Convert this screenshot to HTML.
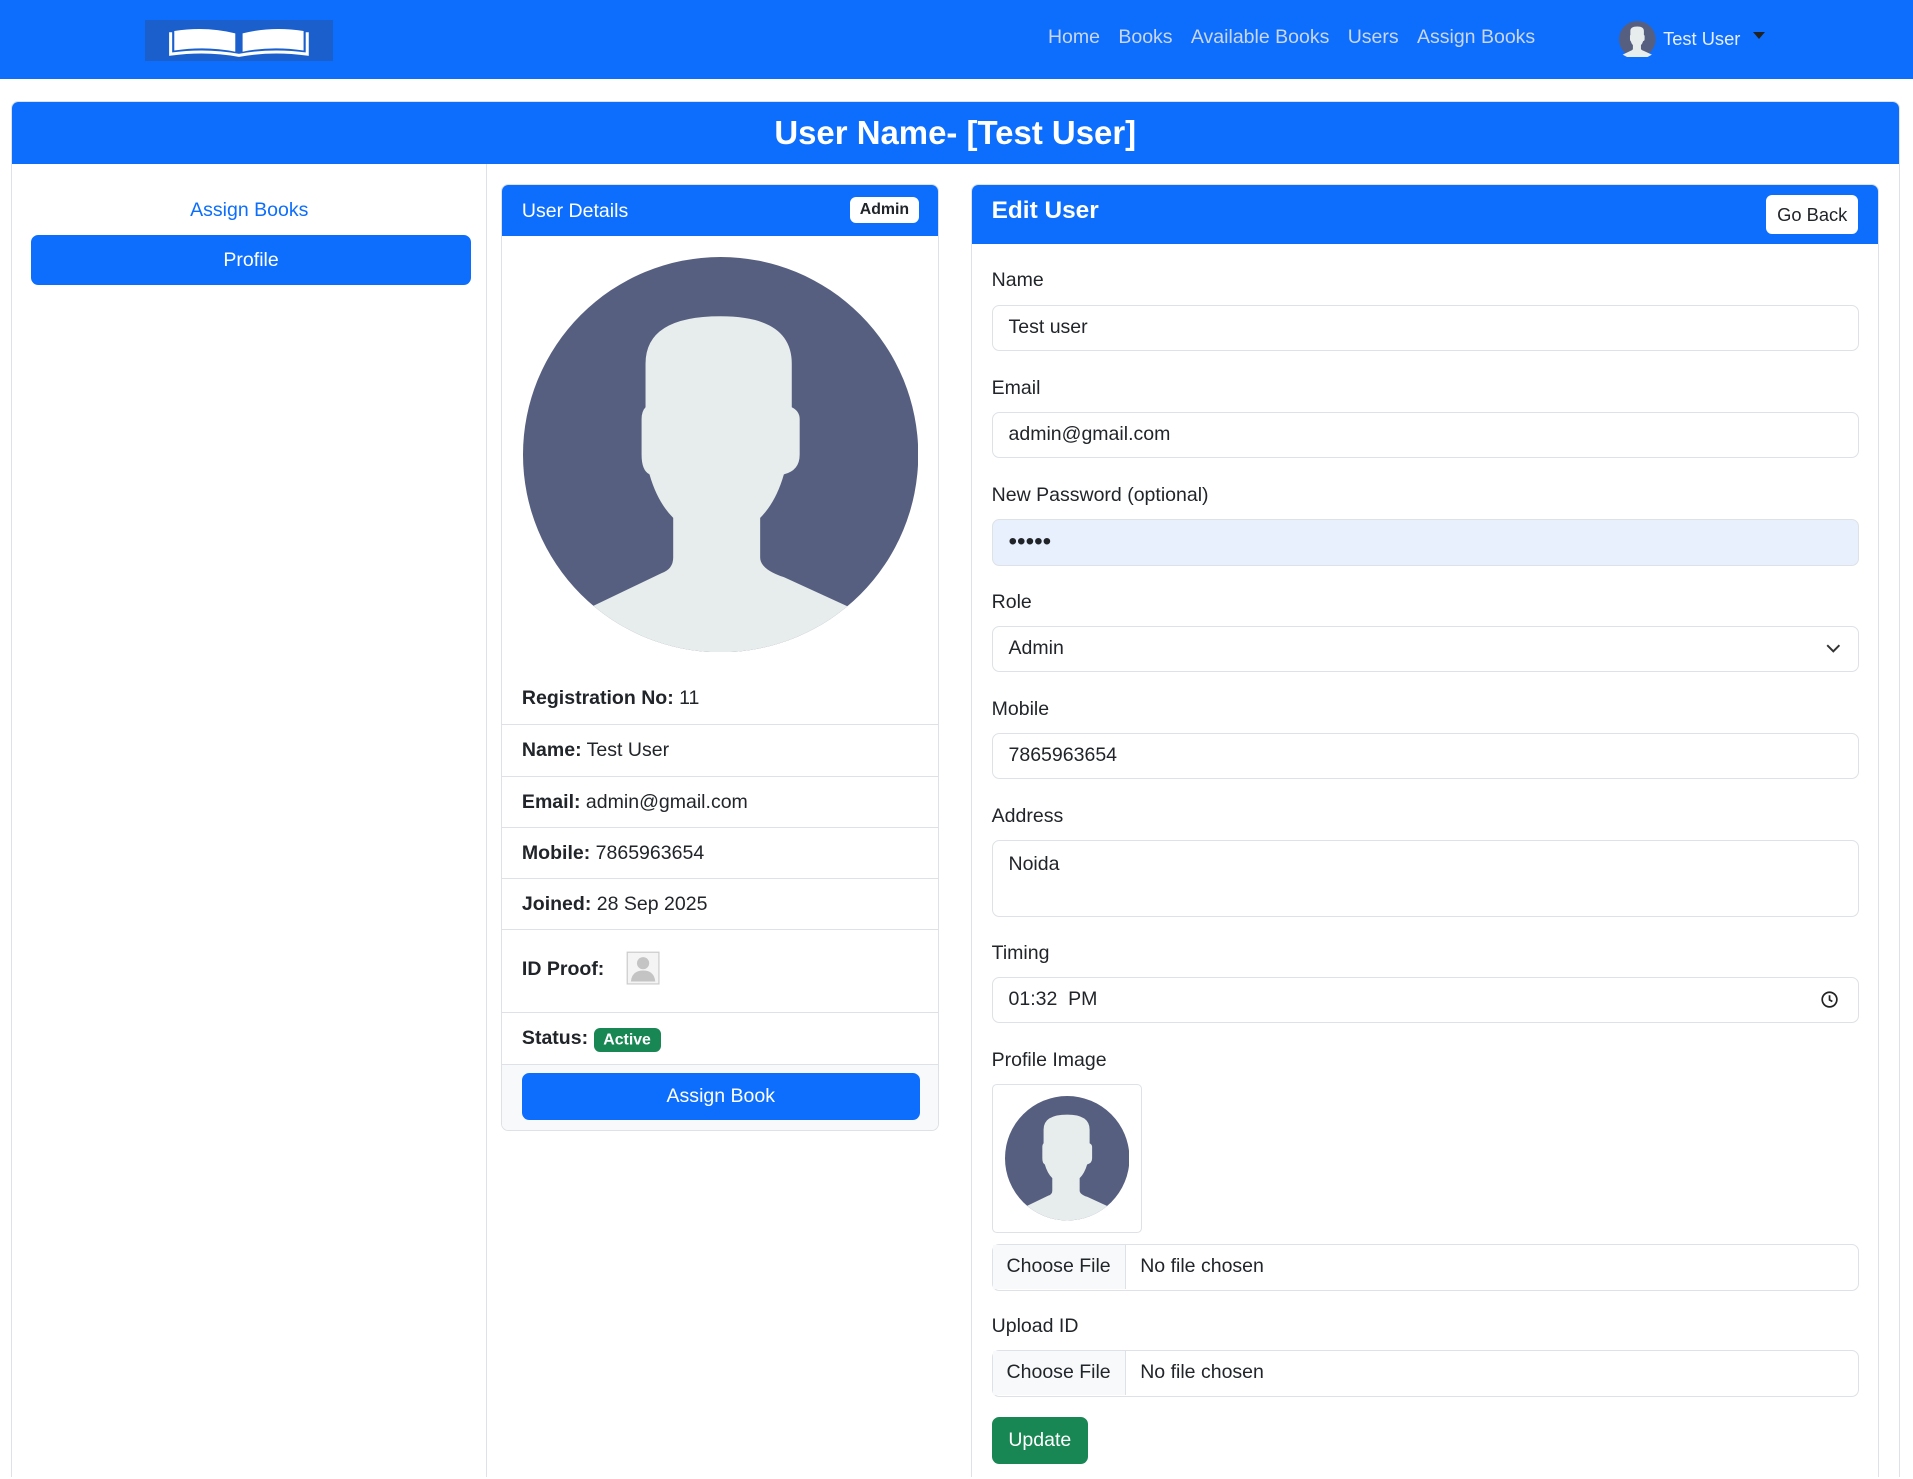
<!DOCTYPE html>
<html><head><meta charset="utf-8">
<style>
html{zoom:1.22;overflow:hidden;height:1211px}
*{box-sizing:border-box}
body{margin:0;height:1211px;overflow:hidden;font-family:"Liberation Sans",sans-serif;font-size:16px;color:#212529;background:#fff}
.wrap{position:relative;width:1568px;height:1211px;overflow:hidden}
.nav{position:absolute;left:0;top:0;width:1568px;height:65px;background:#0d6efd}
.logo{position:absolute;left:119px;top:16px;width:154px;height:34px;background:#1a5fcc}
.links{position:absolute;left:859px;top:21px;font-size:16px;color:#c9d6ee}
.links span{margin-right:15px}
.user{position:absolute;left:1327px;top:17px;color:#e6eeff;font-size:15px}
.main{position:absolute;left:9px;top:83px;width:1548px;height:1128px;border:1px solid #dee2e6;border-bottom:0;border-radius:6px 6px 0 0;overflow:hidden}
.mh{height:51px;background:#0d6efd;color:#fff;text-align:center;font-size:27px;font-weight:bold;line-height:51px}
.left{position:absolute;left:0;top:51px;width:389px;height:1077px;border-right:1px solid #dee2e6}
.abl{position:absolute;left:0;width:389px;top:28px;text-align:center;color:#0d6efd;font-size:16px}
.prof{position:absolute;left:16px;top:58px;width:360px;height:41px;background:#0d6efd;border-radius:6px;color:#fff;text-align:center;line-height:41px}
.card{position:absolute;border:1px solid #dee2e6;border-radius:6px;overflow:hidden;background:#fff}
.ch{background:#0d6efd;color:#fff}
.row{position:absolute;left:0;width:100%;border-top:1px solid #dee2e6;padding-left:16px}
label{position:absolute;left:16px;font-size:16px}
.inp{position:absolute;left:16px;width:711px;height:38px;border:1px solid #dee2e6;border-radius:6px;padding-left:13px;line-height:36px}
</style></head><body><div class="wrap">
<div class="nav">
<div class="logo"><svg width="154" height="34" viewBox="0 0 154 34"><path d="M24 9 Q50 5 74 11 L74 26 Q50 21 24 25Z M80 11 Q104 5 130 9 L130 25 Q104 21 80 26Z" fill="#fff"/><path d="M21 10 L21 28 Q50 24 77 29 Q104 24 133 28 L133 10" fill="none" stroke="#fff" stroke-width="2.5"/></svg></div>
<div class="links"><span>Home</span><span>Books</span><span>Available Books</span><span>Users</span><span>Assign Books</span></div>
<div class="user"><svg width="30" height="30" viewBox="0 0 100 100" style="vertical-align:middle"><circle cx="50" cy="50" r="50" fill="#565f7f"/><path d="M38 66L38 76Q38 79 35 80L10 92L25 100L75 100L90 92L66 81Q60 79 60 76L60 66Q64 62 66 55Q70 54 70 50L70 41Q70 39 68 38L68 27Q68 15 50 15Q31 15 31 27L31 38Q30 39 30 41L30 50Q30 54 32 55Q34 62 38 66Z" fill="#e7ecec"/></svg> <span style="vertical-align:middle;margin-left:2px">Test User</span> <span style="display:inline-block;vertical-align:middle;margin-left:6px;border:5px solid transparent;border-top:6px solid #222;border-bottom:0;position:relative;top:-3px"></span></div>
</div>

<div class="main">
<div class="mh">User Name- [Test User]</div>
<div class="left"><div class="abl">Assign Books</div><div class="prof">Profile</div></div>
</div>

<div class="card" style="left:411px;top:151px;width:359px;height:776px">
<div class="ch" style="height:42px;padding:12px 16px;position:relative">User Details<span style="position:absolute;right:16px;top:10px;background:#fff;color:#212529;font-size:13px;font-weight:bold;padding:3px 8px;border-radius:5px">Admin</span></div>
<svg style="position:absolute;left:17px;top:59px" width="324" height="324" viewBox="0 0 100 100"><defs><clipPath id="c1"><circle cx="50" cy="50" r="50"/></clipPath></defs><circle cx="50" cy="50" r="50" fill="#565f7f"/><path clip-path="url(#c1)" d="M38 66L38 76Q38 79 35 80L10 92L10 100L90 100L90 92L66 81Q60 79 60 76L60 66Q64 62 66 55Q70 54 70 50L70 41Q70 39 68 38L68 27Q68 15 50 15Q31 15 31 27L31 38Q30 39 30 41L30 50Q30 54 32 55Q34 62 38 66Z" fill="#e7ecec"/></svg>
<div class="row" style="top:400px;border-top:0;line-height:42px;height:42px"><b>Registration No:</b> 11</div>
<div class="row" style="top:442px;line-height:41px;height:42px"><b>Name:</b> Test User</div>
<div class="row" style="top:484px;line-height:41px;height:42px"><b>Email:</b> admin@gmail.com</div>
<div class="row" style="top:526px;line-height:41px;height:42px"><b>Mobile:</b> 7865963654</div>
<div class="row" style="top:568px;line-height:41px;height:42px"><b>Joined:</b> 28 Sep 2025</div>
<div class="row" style="top:610px;height:68px;line-height:64px"><b>ID Proof:</b>
<svg style="position:absolute;left:101px;top:17px" width="28" height="30" viewBox="0 0 28 30"><rect x="1" y="1" width="26" height="26" fill="#f4f4f4" stroke="#ccc"/><circle cx="14" cy="10" r="5" fill="#c4c4c4"/><path d="M4 25Q5 16 14 16Q23 16 24 25Z" fill="#c4c4c4"/></svg></div>
<div class="row" style="top:678px;height:42px;line-height:42px"><b>Status:</b> <span style="background:#198754;color:#fff;font-size:13px;font-weight:bold;padding:3px 8px;border-radius:5px">Active</span></div>
<div class="row" style="top:720px;height:56px;background:#f8f9fa"></div>
<div style="position:absolute;left:16px;top:728px;width:326px;height:38px;background:#0d6efd;border-radius:6px;color:#fff;text-align:center;line-height:38px">Assign Book</div>
</div>

<div class="card" style="left:796px;top:151px;width:744px;height:1060px;border-bottom:0;border-radius:6px 6px 0 0">
<div class="ch" style="height:48px;position:relative;padding:10px 16px;font-size:20px;font-weight:bold">Edit User<span style="position:absolute;right:16px;top:8px;background:#fff;color:#212529;font-size:15px;font-weight:normal;padding:7px 9px;border-radius:5px">Go Back</span></div>
<label style="top:69px">Name</label><div class="inp" style="top:98px">Test user</div>
<label style="top:157px">Email</label><div class="inp" style="top:186px">admin@gmail.com</div>
<label style="top:245px">New Password (optional)</label><div class="inp" style="top:274px;background:#e8f0fe;font-size:20px;letter-spacing:0px">•••••</div>
<label style="top:333px">Role</label><div class="inp" style="top:361px">Admin<svg style="position:absolute;right:14px;top:14px" width="12" height="8" viewBox="0 0 12 8"><path d="M1 1l5 5 5-5" fill="none" stroke="#333" stroke-width="1.6"/></svg></div>
<label style="top:420px">Mobile</label><div class="inp" style="top:449px">7865963654</div>
<label style="top:508px">Address</label><div class="inp" style="top:537px;height:63px;line-height:1;padding-top:11px">Noida</div>
<label style="top:620px">Timing</label><div class="inp" style="top:649px">01:32&nbsp; PM<svg style="position:absolute;right:16px;top:11px" width="14" height="14" viewBox="0 0 14 14"><circle cx="7" cy="7" r="6" fill="none" stroke="#222" stroke-width="1.4"/><path d="M7 3.5V7.3L9.3 8.6" fill="none" stroke="#222" stroke-width="1.4"/></svg></div>
<label style="top:708px">Profile Image</label>
<div style="position:absolute;left:16px;top:737px;width:123px;height:122px;border:1px solid #dee2e6;border-radius:4px"><svg style="position:absolute;left:10px;top:9px" width="102" height="102" viewBox="0 0 100 100"><defs><clipPath id="c2"><circle cx="50" cy="50" r="50"/></clipPath></defs><circle cx="50" cy="50" r="50" fill="#565f7f"/><path clip-path="url(#c2)" d="M38 66L38 76Q38 79 35 80L10 92L10 100L90 100L90 92L66 81Q60 79 60 76L60 66Q64 62 66 55Q70 54 70 50L70 41Q70 39 68 38L68 27Q68 15 50 15Q31 15 31 27L31 38Q30 39 30 41L30 50Q30 54 32 55Q34 62 38 66Z" fill="#e7ecec"/></svg></div>
<div class="inp" style="top:868px;padding:0"><span style="display:inline-block;width:109px;height:36px;background:#f8f9fa;border-right:1px solid #dee2e6;text-align:center">Choose File</span><span style="margin-left:12px">No file chosen</span></div>
<label style="top:926px">Upload ID</label>
<div class="inp" style="top:955px;padding:0"><span style="display:inline-block;width:109px;height:36px;background:#f8f9fa;border-right:1px solid #dee2e6;text-align:center">Choose File</span><span style="margin-left:12px">No file chosen</span></div>
<div style="position:absolute;left:16px;top:1010px;width:79px;height:38px;background:#198754;color:#fff;border-radius:6px;text-align:center;line-height:38px">Update</div>
</div>
</div></body></html>
